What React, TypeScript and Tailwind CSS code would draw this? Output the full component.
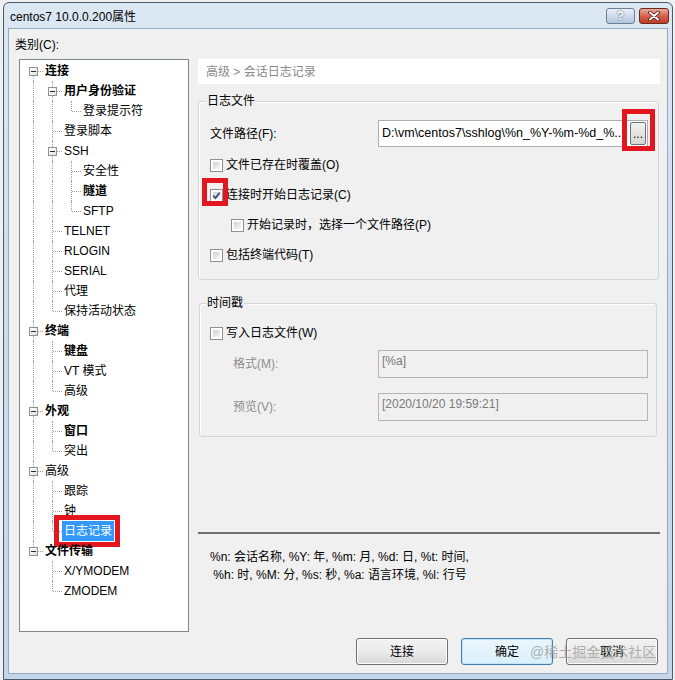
type Guide = "" | "I" | "T" | "L" | "F";

type TreeNode = {
  label: string;
  guides: Guide[];
  bold?: boolean;
  exp?: boolean;
  selected?: boolean;
};

const nodes: TreeNode[] = [
  { label: "连接", guides: ["F"], bold: true, exp: true },
  { label: "用户身份验证", guides: ["I", "T"], bold: true, exp: true },
  { label: "登录提示符", guides: ["I", "I", "L"] },
  { label: "登录脚本", guides: ["I", "T"] },
  { label: "SSH", guides: ["I", "T"], exp: true },
  { label: "安全性", guides: ["I", "I", "T"] },
  { label: "隧道", guides: ["I", "I", "T"], bold: true },
  { label: "SFTP", guides: ["I", "I", "L"] },
  { label: "TELNET", guides: ["I", "T"] },
  { label: "RLOGIN", guides: ["I", "T"] },
  { label: "SERIAL", guides: ["I", "T"] },
  { label: "代理", guides: ["I", "T"] },
  { label: "保持活动状态", guides: ["I", "L"] },
  { label: "终端", guides: ["T"], bold: true, exp: true },
  { label: "键盘", guides: ["I", "T"], bold: true },
  { label: "VT 模式", guides: ["I", "T"] },
  { label: "高级", guides: ["I", "L"] },
  { label: "外观", guides: ["T"], bold: true, exp: true },
  { label: "窗口", guides: ["I", "T"], bold: true },
  { label: "突出", guides: ["I", "L"] },
  { label: "高级", guides: ["T"], exp: true },
  { label: "跟踪", guides: ["I", "T"] },
  { label: "钟", guides: ["I", "T"] },
  { label: "日志记录", guides: ["I", "L"], selected: true },
  { label: "文件传输", guides: ["L"], bold: true, exp: true },
  { label: "X/YMODEM", guides: ["", "T"] },
  { label: "ZMODEM", guides: ["", "L"] },
];

// one indent column of the tree: dotted guides + optional expander box
function GuideCell({ g, exp }: { g: Guide; exp?: boolean }) {
  return (
    <span className="relative w-[19px] h-full shrink-0">
      {(g === "I" || g === "T") && (
        <span className="absolute left-[9px] top-0 bottom-0 border-l border-dotted border-[#a0a0a0]" />
      )}
      {g === "L" && <span className="absolute left-[9px] top-0 h-[10px] border-l border-dotted border-[#a0a0a0]" />}
      {g === "F" && <span className="absolute left-[9px] top-[10px] bottom-0 border-l border-dotted border-[#a0a0a0]" />}
      {(g === "T" || g === "L" || g === "F") && (
        <span className="absolute left-[10px] right-0 top-[10px] border-t border-dotted border-[#a0a0a0]" />
      )}
      {exp && (
        <span className="absolute left-[5px] top-[6px] w-[9px] h-[9px] border border-[#919191] bg-gradient-to-br from-white to-[#e2e2e2] flex items-center justify-center">
          <span className="w-[5px] h-px bg-[#2b2b2b]" />
        </span>
      )}
    </span>
  );
}

function Check({ checked }: { checked?: boolean }) {
  return (
    <span className="relative w-[13px] h-[13px] shrink-0 border border-[#8f8f8f] bg-white p-[2px]">
      <span className="block w-full h-full bg-gradient-to-br from-[#d2d2d2] to-[#f6f6f6]" />
      {checked && (
        <svg className="absolute inset-0" viewBox="0 0 11 11" width="11" height="11">
          <path d="M2.2 5.6 L4.4 8 L8.8 2.6" fill="none" stroke="#3f4f7d" strokeWidth="1.8" />
        </svg>
      )}
    </span>
  );
}

function CheckRow({ label, checked, indent }: { label: string; checked?: boolean; indent?: boolean }) {
  return (
    <div className={`flex items-center h-[30px] gap-[3px] ${indent ? "pl-[21px]" : ""}`}>
      <Check checked={checked} />
      <span>{label}</span>
    </div>
  );
}

function DlgButton({ label, focused }: { label: string; focused?: boolean }) {
  return (
    <button
      className={`w-[92px] h-[27px] rounded-[3px] border ${
        focused
          ? "border-[#3c7fb1] bg-gradient-to-b from-[#eaf6fd] to-[#d9f0fc] shadow-[inset_0_0_0_1px_#c4e5f6]"
          : "border-[#707070] bg-gradient-to-b from-[#f2f2f2] via-[#ebebeb] to-[#d6d6d6] shadow-[inset_0_0_0_1px_#fcfcfc]"
      } text-black`}
    >
      {label}
    </button>
  );
}

export default function App() {
  return (
    <div className="relative w-[675px] h-[680px] overflow-hidden bg-[#eef0f2] pl-[3px] pt-[2px] text-[12px] text-black [font-family:'Liberation_Sans','Noto_Sans_CJK_SC',sans-serif]">
      {/* window frame */}
      <div className="w-[670px] h-[678px] rounded-t-[6px] border border-[#4b5a6c] bg-gradient-to-b from-[#dce7f4] via-[#cddbed] to-[#c5d6ea] px-[4px] flex flex-col">
        {/* title bar */}
        <div className="h-[25px] flex items-start shrink-0">
          <span className="mt-[6px] ml-[2px] leading-[16px] text-[12px] text-black">centos7 10.0.0.200属性</span>
          <div className="ml-auto -mr-[1px] mt-[5px] flex gap-[4px]">
            <span className="w-[29px] h-[16px] rounded-[3px] border border-[#6d7f95] bg-gradient-to-b from-[#eaf0f7] via-[#cfdcec] to-[#b4c6dc] flex items-center justify-center text-white font-bold text-[12px] leading-none [text-shadow:0_0_2px_#2c3b50]">
              ?
            </span>
            <span className="w-[30px] h-[16px] rounded-[3px] border border-[#6b2a20] bg-gradient-to-b from-[#e9a99a] via-[#d5614c] to-[#c13c26] flex items-center justify-center">
              <svg width="12" height="10" viewBox="0 0 12 10">
                <path d="M2 1.5 L10 8.5 M10 1.5 L2 8.5" stroke="#4a1409" strokeWidth="3.6" strokeLinecap="round" />
                <path d="M2 1.5 L10 8.5 M10 1.5 L2 8.5" stroke="#fff" strokeWidth="2" strokeLinecap="round" />
              </svg>
            </span>
          </div>
        </div>

        {/* dialog body */}
        <div className="h-[646px] border border-[#98aac1] bg-[#f0f0f0] pt-[8px] pl-[10px] pr-[7px] pb-[8px] flex flex-col">
          <span className="-ml-[4px] leading-[16px]">类别(C):</span>

          <div className="mt-[6px] h-[573px] flex gap-[9px]">
            {/* category tree */}
            <div className="w-[170px] shrink-0 border border-[#828790] bg-white pt-[1px] pl-[4px]">
              {nodes.map((n, i) => (
                <div key={i} className="flex h-[20px] items-stretch">
                  {n.guides.map((g, j) => (
                    <GuideCell key={j} g={g} exp={n.exp && j === n.guides.length - 1} />
                  ))}
                  <span
                    className={`relative flex items-center px-[2px] whitespace-nowrap ${n.bold ? "font-bold" : ""} ${
                      n.selected ? "bg-[#3399ff] text-white" : ""
                    }`}
                  >
                    {n.label}
                    {n.selected && (
                      <span className="absolute -left-[8px] -right-[6px] -top-[6px] -bottom-[6px] border-[5px] border-[#e3161f]" />
                    )}
                  </span>
                </div>
              ))}
            </div>

            {/* settings page */}
            <div className="flex-1 min-w-0 flex flex-col">
              <div className="h-[25px] bg-white flex items-center pl-[8px] text-[#8a8a8a]">高级 &gt; 会话日志记录</div>

              {/* 日志文件 */}
              <div className="relative mt-[17px] mr-[1px] border border-[#d5d5d5] rounded-[3px] shadow-[inset_1px_1px_0_#fff] pt-[18px] pb-[9px] pl-[11px] pr-[10px]">
                <span className="absolute -top-[9px] left-[7px] bg-[#f0f0f0] px-[1px] leading-[16px]">日志文件</span>
                <div className="flex items-center h-[27px]">
                  <span className="w-[168px] shrink-0">文件路径(F):</span>
                  <div className="flex-1 min-w-0 h-full border border-[#abadb3] bg-white flex items-center pl-[3px] pr-[1px]">
                    <span className="flex-1 min-w-0 overflow-hidden whitespace-nowrap text-[12.5px]">
                      D:\vm\centos7\sshlog\%n_%Y-%m-%d_%..
                    </span>
                    <span className="relative w-[16px] h-[23px] shrink-0 rounded-[2px] border border-[#707070] bg-gradient-to-b from-[#f2f2f2] to-[#d6d6d6] flex items-center justify-center leading-none">
                      ...
                      <span className="absolute -left-[9px] -right-[10px] -top-[14px] -bottom-[7px] border-[5px] border-[#e3161f]" />
                    </span>
                  </div>
                </div>
                <div className="mt-[3px]">
                  <CheckRow label="文件已存在时覆盖(O)" />
                  <div className="relative">
                    <CheckRow label="连接时开始日志记录(C)" checked />
                    <span className="absolute left-[-8px] top-[-2px] w-[26px] h-[28px] border-[5px] border-[#e3161f]" />
                  </div>
                  <CheckRow label="开始记录时，选择一个文件路径(P)" indent />
                  <CheckRow label="包括终端代码(T)" />
                </div>
              </div>

              {/* 时间戳 */}
              <div className="relative mt-[23px] ml-[1px] mr-[3px] border border-[#d5d5d5] rounded-[3px] shadow-[inset_1px_1px_0_#fff] pt-[14px] pb-[15px] pl-[10px] pr-[8px]">
                <span className="absolute -top-[9px] left-[6px] bg-[#f0f0f0] px-[1px] leading-[16px]">时间戳</span>
                <CheckRow label="写入日志文件(W)" />
                <div className="mt-[2px] flex items-center h-[28px]">
                  <span className="w-[168px] shrink-0 pl-[23px] text-[#8d8d8d]">格式(M):</span>
                  <div className="flex-1 min-w-0 h-full border border-[#b5b5b5] bg-[#f0f0f0] pl-[3px] pt-[2px] leading-[16px] text-[#7a7a7a]">
                    [%a]
                  </div>
                </div>
                <div className="mt-[15px] flex items-center h-[28px]">
                  <span className="w-[168px] shrink-0 pl-[23px] text-[#8d8d8d]">预览(V):</span>
                  <div className="flex-1 min-w-0 h-full border border-[#b5b5b5] bg-[#f0f0f0] pl-[3px] pt-[2px] leading-[16px] text-[#7a7a7a]">
                    [2020/10/20 19:59:21]
                  </div>
                </div>
              </div>

              <div className="mt-[95px] border-t-2 border-[#707070]" />

              <div className="mt-[14px] pl-[12px] leading-[18px] whitespace-pre">
                <div>%n: 会话名称, %Y: 年, %m: 月, %d: 日, %t: 时间,</div>
                <div> %h: 时, %M: 分, %s: 秒, %a: 语言环境, %l: 行号</div>
              </div>
            </div>
          </div>

          {/* dialog buttons */}
          <div className="mt-[6px] flex justify-end gap-[13px] pr-[2px]">
            <DlgButton label="连接" />
            <DlgButton label="确定" focused />
            <DlgButton label="取消" />
          </div>
        </div>
      </div>

      {/* site watermark over the buttons */}
      <span className="absolute left-[530px] top-[643px] text-[14px] leading-[18px] text-[#9c9c9c]/80 whitespace-nowrap">
        @稀土掘金技术社区
      </span>
    </div>
  );
}
